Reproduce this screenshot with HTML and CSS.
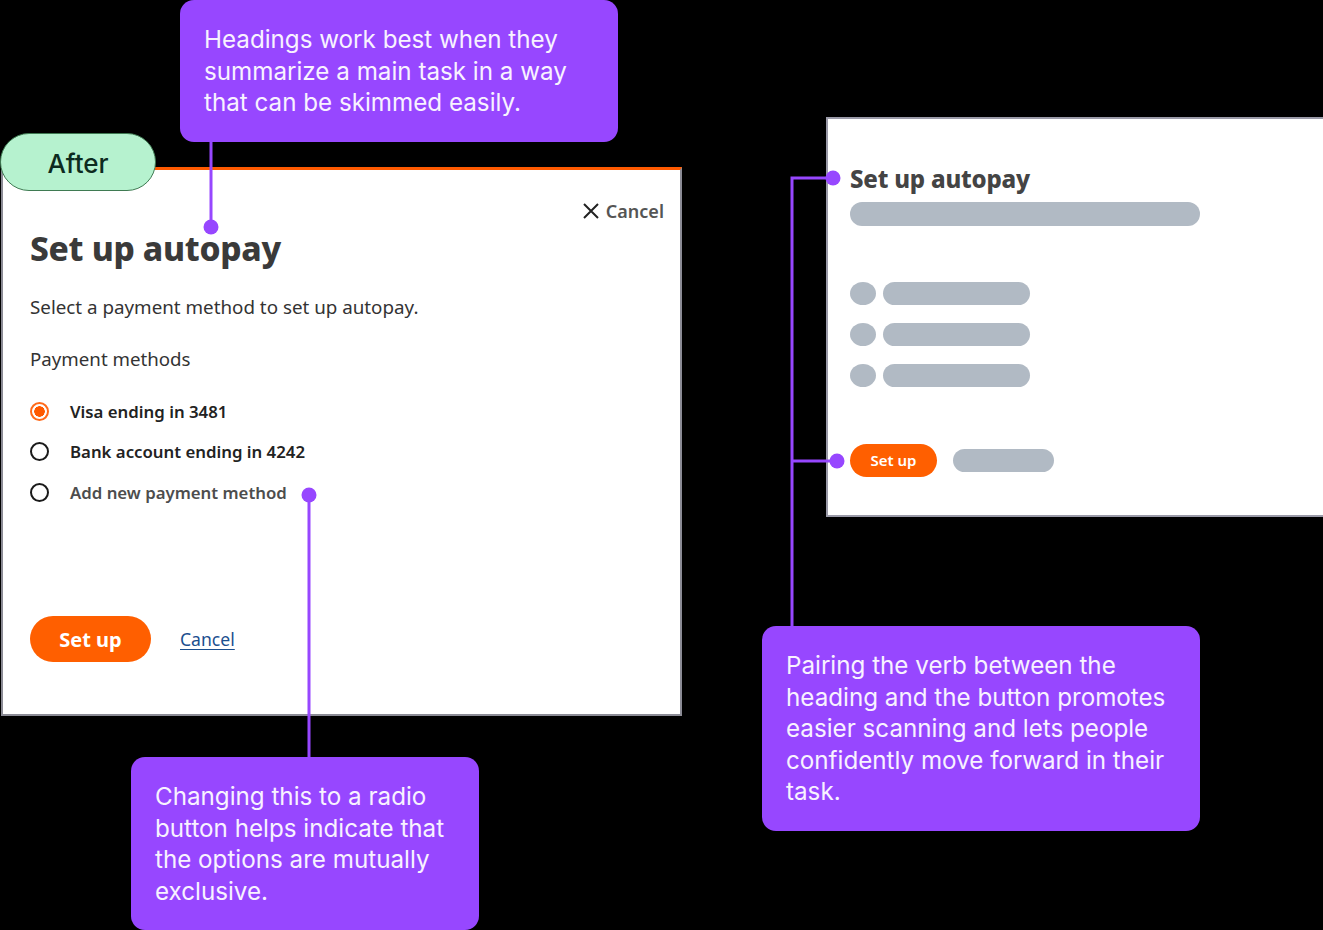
FILE: index.html
```html
<!DOCTYPE html>
<html lang="en">

<head>
  <meta charset="UTF-8">
  <meta name="viewport" content="width=device-width, initial-scale=1.0">
  <title>Set up autopay - annotated</title>
  <link rel="stylesheet" href="styles.css">
</head>

<body>
  <div class="canvas">

    <!-- Connector lines and dots -->
    <svg class="connectors" width="1323" height="930" viewBox="0 0 1323 930">
      <g stroke="#9747ff" stroke-width="3" fill="none">
        <line x1="211" y1="140" x2="211" y2="227" />
        <line x1="309" y1="495" x2="309" y2="758" />
        <polyline points="833,178 792,178 792,627" />
        <line x1="792" y1="461" x2="837" y2="461" />
      </g>
      <g fill="#9747ff">
        <circle cx="211" cy="227" r="7.5" />
        <circle cx="309" cy="495" r="7.5" />
        <circle cx="833" cy="178" r="7.5" />
        <circle cx="837" cy="461" r="7.5" />
      </g>
    </svg>

    <!-- Dialog -->
    <div class="dialog">
      <div class="dialog-top">
        <span class="close">
          <svg width="18" height="18" viewBox="0 0 18 18">
            <path d="M2 2 L16 16 M16 2 L2 16" stroke="#222" stroke-width="2" fill="none" />
          </svg>
          Cancel
        </span>
      </div>
      <h1>Set up autopay</h1>
      <p class="intro">Select a payment method to set up autopay.</p>
      <p class="group-label">Payment methods</p>
      <div class="options">
        <label class="option"><span class="radio checked"></span><span class="opt-text">Visa ending in 3481</span></label>
        <label class="option"><span class="radio"></span><span class="opt-text">Bank account ending in 4242</span></label>
        <label class="option"><span class="radio"></span><span class="opt-text muted">Add new payment method</span></label>
      </div>
      <div class="actions">
        <button class="btn-primary">Set up</button>
        <a class="link" href="#">Cancel</a>
      </div>
    </div>

    <div class="tag">After</div>

    <!-- Wireframe -->
    <div class="wire">
      <div class="wire-title">Set up autopay</div>
      <div class="bar bar-wide"></div>
      <div class="wire-list">
        <div class="wire-row"><span class="dot"></span><span class="bar bar-item"></span></div>
        <div class="wire-row"><span class="dot"></span><span class="bar bar-item"></span></div>
        <div class="wire-row"><span class="dot"></span><span class="bar bar-item"></span></div>
      </div>
      <div class="wire-actions">
        <span class="wire-btn">Set up</span>
        <span class="bar bar-link"></span>
      </div>
    </div>

    <!-- Callouts -->
    <div class="note note-heading">Headings work best when they summarize a main task in a way that can be skimmed easily.</div>
    <div class="note note-radio">Changing this to a radio button helps indicate that the options are mutually exclusive.</div>
    <div class="note note-verb">Pairing the verb between the heading and the button promotes easier scanning and lets people confidently move forward in their task.</div>
  </div>
</body>

</html>
```

FILE: styles.css
```css
body {
  margin: 0;
  background: #000;
  font-family: "Noto Sans", "Open Sans", sans-serif;
}

.canvas {
  position: relative;
  width: 1323px;
  height: 930px;
  overflow: hidden;
  background: #000;
}

.connectors {
  position: absolute;
  left: 0;
  top: 0;
  z-index: 3;
}

/* Dialog */
.dialog {
  position: absolute;
  left: 1px;
  top: 167px;
  box-sizing: border-box;
  width: 681px;
  height: 549px;
  padding: 30px 16px 0 27px;
  background: #fff;
  border: 2px solid #8b8b95;
  border-top: 3px solid #ff5a00;
}

.dialog-top {
  display: flex;
  justify-content: flex-end;
  height: 22px;
}

.close {
  display: flex;
  align-items: center;
  gap: 6px;
  font-size: 18px;
  font-weight: 600;
  color: #555;
}

.dialog h1 {
  margin: 4px 0 0;
  font-size: 33.5px;
  line-height: 44px;
  font-weight: 800;
  color: #3a3a3a;
  letter-spacing: -0.3px;
}

.intro {
  margin: 25px 0 0;
  font-size: 18.8px;
  line-height: 24px;
  color: #333;
}

.group-label {
  margin: 28px 0 0;
  font-size: 18.7px;
  line-height: 24px;
  color: #333;
}

.options {
  display: flex;
  flex-direction: column;
  gap: 16.5px;
  margin-top: 28px;
}

.option {
  display: flex;
  align-items: center;
  height: 24px;
}

.radio {
  box-sizing: border-box;
  width: 19px;
  height: 19px;
  margin-right: 21px;
  border: 2px solid #1a1a1a;
  border-radius: 50%;
  background: #fff;
}

.radio.checked {
  border-color: #ff6a1a;
  background: radial-gradient(circle, #ff5a00 0 5px, #fff 5.5px);
}

.opt-text {
  font-size: 16.8px;
  font-weight: 600;
  color: #222;
}

.opt-text.muted {
  color: #4d4d4d;
}

.actions {
  display: flex;
  align-items: center;
  gap: 29px;
  margin-top: 112px;
}

.btn-primary {
  width: 121px;
  height: 46px;
  border: none;
  border-radius: 23px;
  background: #ff5f00;
  color: #fff;
  font-family: inherit;
  font-size: 20px;
  font-weight: 700;
}

.link {
  color: #1b4f8f;
  font-size: 17.6px;
  text-decoration: underline;
  text-underline-offset: 3px;
}

.tag {
  position: absolute;
  left: 0;
  top: 133px;
  z-index: 2;
  box-sizing: border-box;
  width: 156px;
  height: 58px;
  border: 1px solid #3f7a52;
  border-radius: 29px;
  background: #b6f2cf;
  color: #0d2b1f;
  font-family: Inter, sans-serif;
  font-size: 26px;
  font-weight: 500;
  line-height: 60px;
  text-align: center;
}

/* Wireframe */
.wire {
  position: absolute;
  left: 826px;
  top: 117px;
  box-sizing: border-box;
  width: 497px;
  height: 400px;
  padding: 45px 0 0 22px;
  background: #fff;
  border: 2px solid #9a9aa8;
  border-right: none;
}

.wire-title {
  font-size: 24px;
  line-height: 30px;
  font-weight: 800;
  color: #444;
  letter-spacing: -0.2px;
}

.bar {
  display: block;
  background: #b1bac4;
  border-radius: 12px;
}

.bar-wide {
  width: 350px;
  height: 24px;
  margin-top: 8px;
}

.wire-list {
  display: flex;
  flex-direction: column;
  gap: 18px;
  margin-top: 56px;
}

.wire-row {
  display: flex;
  align-items: center;
  gap: 7px;
}

.dot {
  width: 26px;
  height: 23px;
  border-radius: 50%;
  background: #b1bac4;
}

.bar-item {
  width: 147px;
  height: 23px;
}

.wire-actions {
  display: flex;
  align-items: center;
  gap: 16px;
  margin-top: 57px;
}

.wire-btn {
  width: 87px;
  height: 33px;
  border-radius: 17px;
  background: #ff5f00;
  color: #fff;
  font-size: 15px;
  font-weight: 600;
  line-height: 33px;
  text-align: center;
}

.bar-link {
  width: 101px;
  height: 23px;
}

/* Callouts */
.note {
  position: absolute;
  z-index: 4;
  box-sizing: border-box;
  padding: 24px 18px 0 24px;
  background: #9747ff;
  border-radius: 14px;
  color: #f8f2ff;
  font-family: Inter, sans-serif;
  font-size: 24.2px;
  line-height: 31.5px;
}

.note-heading {
  left: 180px;
  top: 0;
  width: 438px;
  height: 142px;
}

.note-radio {
  left: 131px;
  top: 757px;
  width: 348px;
  height: 173px;
}

.note-verb {
  left: 762px;
  top: 626px;
  width: 438px;
  height: 205px;
}
```
